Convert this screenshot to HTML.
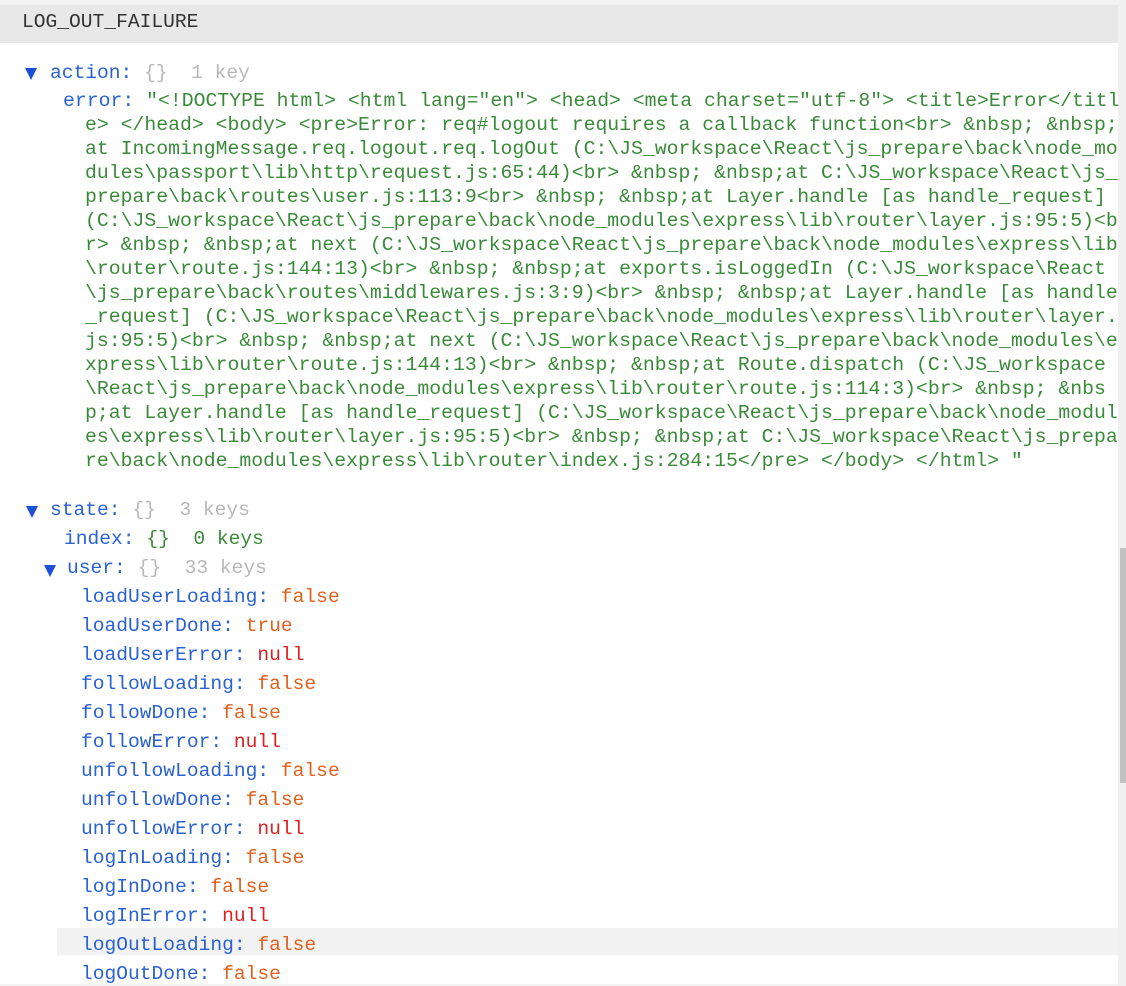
<!DOCTYPE html>
<html><head><meta charset="utf-8"><style>
html,body{margin:0;padding:0;width:1126px;height:986px;overflow:hidden;background:#f3f3f3;}
body{font-family:"Liberation Mono",monospace;font-size:19.6px;position:relative;}
.main{position:absolute;left:0;top:5px;width:1118px;height:979px;background:#fff;}
.hdr{position:absolute;left:0;top:5px;width:1118px;height:38px;background:#e8e8e8;}
.t{position:absolute;white-space:pre;line-height:24px;}
.k{color:#2a62d2}.g{color:#b8b8b8}.s{color:#3a8a3a}.b{color:#e0601c}.n{color:#dc2020}
.tri{position:absolute;width:0;height:0;border-left:6px solid transparent;border-right:6px solid transparent;border-top:12px solid #1b4fd6;}
.sb{position:absolute;left:1118px;top:0;width:8px;height:986px;background:#f0f0f0;}
.th{position:absolute;left:1120px;top:548px;width:6px;height:235px;background:#c1c1c1;}
.hl{position:absolute;left:57px;top:928px;width:1061px;height:27px;background:#f2f2f2;}
</style></head><body>
<div class="main"></div>
<div class="hdr"></div>
<div class="sb"></div><div class="th"></div>
<div class="t" style="left:22px;top:10px;color:#333">LOG_OUT_FAILURE</div>
<div class="tri" style="left:25px;top:68px"></div>
<div class="t" style="left:50px;top:61px"><span class="k">action:</span> <span class="g">{}  1 key</span></div>
<div class="t s" style="left:63px;top:89px;font-size:19.8px"><span class="k">error:</span> "&lt;!DOCTYPE html&gt; &lt;html lang="en"&gt; &lt;head&gt; &lt;meta charset="utf-8"&gt; &lt;title&gt;Error&lt;/titl</div>
<div class="t s" style="left:85px;top:113px;font-size:19.8px">e&gt; &lt;/head&gt; &lt;body&gt; &lt;pre&gt;Error: req#logout requires a callback function&lt;br&gt; &amp;nbsp; &amp;nbsp;
at IncomingMessage.req.logout.req.logOut (C:\JS_workspace\React\js_prepare\back\node_mo
dules\passport\lib\http\request.js:65:44)&lt;br&gt; &amp;nbsp; &amp;nbsp;at C:\JS_workspace\React\js_
prepare\back\routes\user.js:113:9&lt;br&gt; &amp;nbsp; &amp;nbsp;at Layer.handle [as handle_request]
(C:\JS_workspace\React\js_prepare\back\node_modules\express\lib\router\layer.js:95:5)&lt;b
r&gt; &amp;nbsp; &amp;nbsp;at next (C:\JS_workspace\React\js_prepare\back\node_modules\express\lib
\router\route.js:144:13)&lt;br&gt; &amp;nbsp; &amp;nbsp;at exports.isLoggedIn (C:\JS_workspace\React
\js_prepare\back\routes\middlewares.js:3:9)&lt;br&gt; &amp;nbsp; &amp;nbsp;at Layer.handle [as handle
_request] (C:\JS_workspace\React\js_prepare\back\node_modules\express\lib\router\layer.
js:95:5)&lt;br&gt; &amp;nbsp; &amp;nbsp;at next (C:\JS_workspace\React\js_prepare\back\node_modules\e
xpress\lib\router\route.js:144:13)&lt;br&gt; &amp;nbsp; &amp;nbsp;at Route.dispatch (C:\JS_workspace
\React\js_prepare\back\node_modules\express\lib\router\route.js:114:3)&lt;br&gt; &amp;nbsp; &amp;nbs
p;at Layer.handle [as handle_request] (C:\JS_workspace\React\js_prepare\back\node_modul
es\express\lib\router\layer.js:95:5)&lt;br&gt; &amp;nbsp; &amp;nbsp;at C:\JS_workspace\React\js_prepa
re\back\node_modules\express\lib\router\index.js:284:15&lt;/pre&gt; &lt;/body&gt; &lt;/html&gt; "</div>
<div class="tri" style="left:26px;top:506px"></div>
<div class="t" style="left:50px;top:498px"><span class="k">state:</span> <span class="g">{}  3 keys</span></div>
<div class="t" style="left:64px;top:527px"><span class="k">index:</span> <span class="s">{}  0 keys</span></div>
<div class="tri" style="left:44px;top:565px"></div>
<div class="t" style="left:67px;top:556px"><span class="k">user:</span> <span class="g">{}  33 keys</span></div>
<div class="hl"></div>
<div class="t" style="left:81px;top:583px;line-height:29px"><span class="k">loadUserLoading:</span> <span class="b">false</span>
<span class="k">loadUserDone:</span> <span class="b">true</span>
<span class="k">loadUserError:</span> <span class="n">null</span>
<span class="k">followLoading:</span> <span class="b">false</span>
<span class="k">followDone:</span> <span class="b">false</span>
<span class="k">followError:</span> <span class="n">null</span>
<span class="k">unfollowLoading:</span> <span class="b">false</span>
<span class="k">unfollowDone:</span> <span class="b">false</span>
<span class="k">unfollowError:</span> <span class="n">null</span>
<span class="k">logInLoading:</span> <span class="b">false</span>
<span class="k">logInDone:</span> <span class="b">false</span>
<span class="k">logInError:</span> <span class="n">null</span>
<span class="k">logOutLoading:</span> <span class="b">false</span>
<span class="k">logOutDone:</span> <span class="b">false</span></div>
</body></html>
